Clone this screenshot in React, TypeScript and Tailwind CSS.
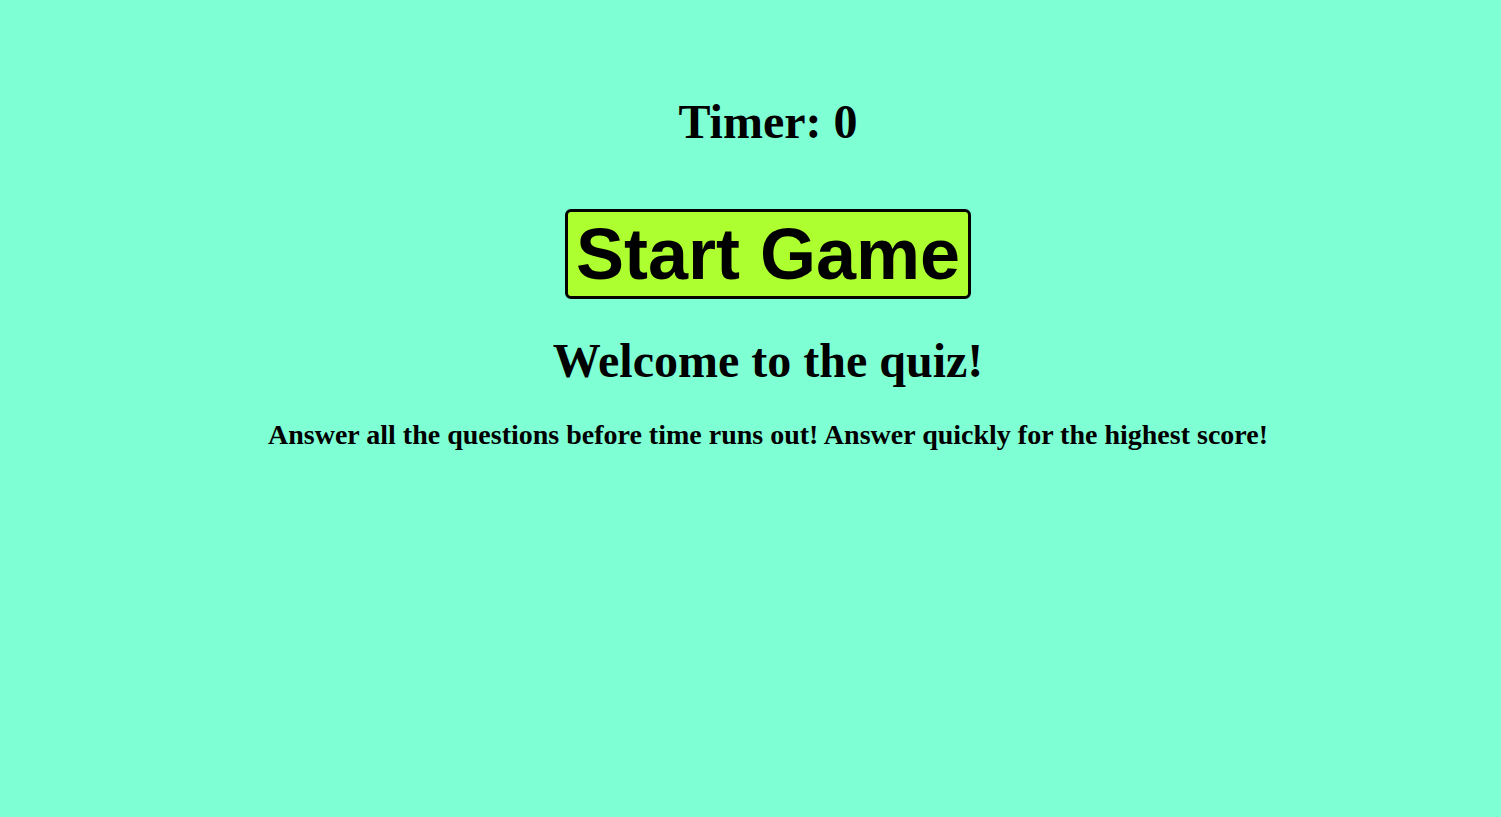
import React from 'react';

export default function App() {
  return (
    <div className="min-h-[817px] bg-[#7fffd4] pl-[35px] flex flex-col items-center text-black font-['Liberation_Serif',serif]">
      <h1 className="mt-[94px] text-[48px] leading-[55px] font-bold">Timer: 0</h1>
      <button className="mt-[60px] border-[3px] border-black rounded-[6px] bg-[#adff2f] px-[8px] text-[72px] leading-[84px] font-bold font-['Liberation_Sans',Arial,sans-serif]">
        Start Game
      </button>
      <h2 className="mt-[34px] text-[48px] leading-[55px] font-bold">Welcome to the quiz!</h2>
      <p className="mt-[31px] text-[28px] leading-[32px] font-bold">
        Answer all the questions before time runs out! Answer quickly for the highest score!
      </p>
    </div>
  );
}
